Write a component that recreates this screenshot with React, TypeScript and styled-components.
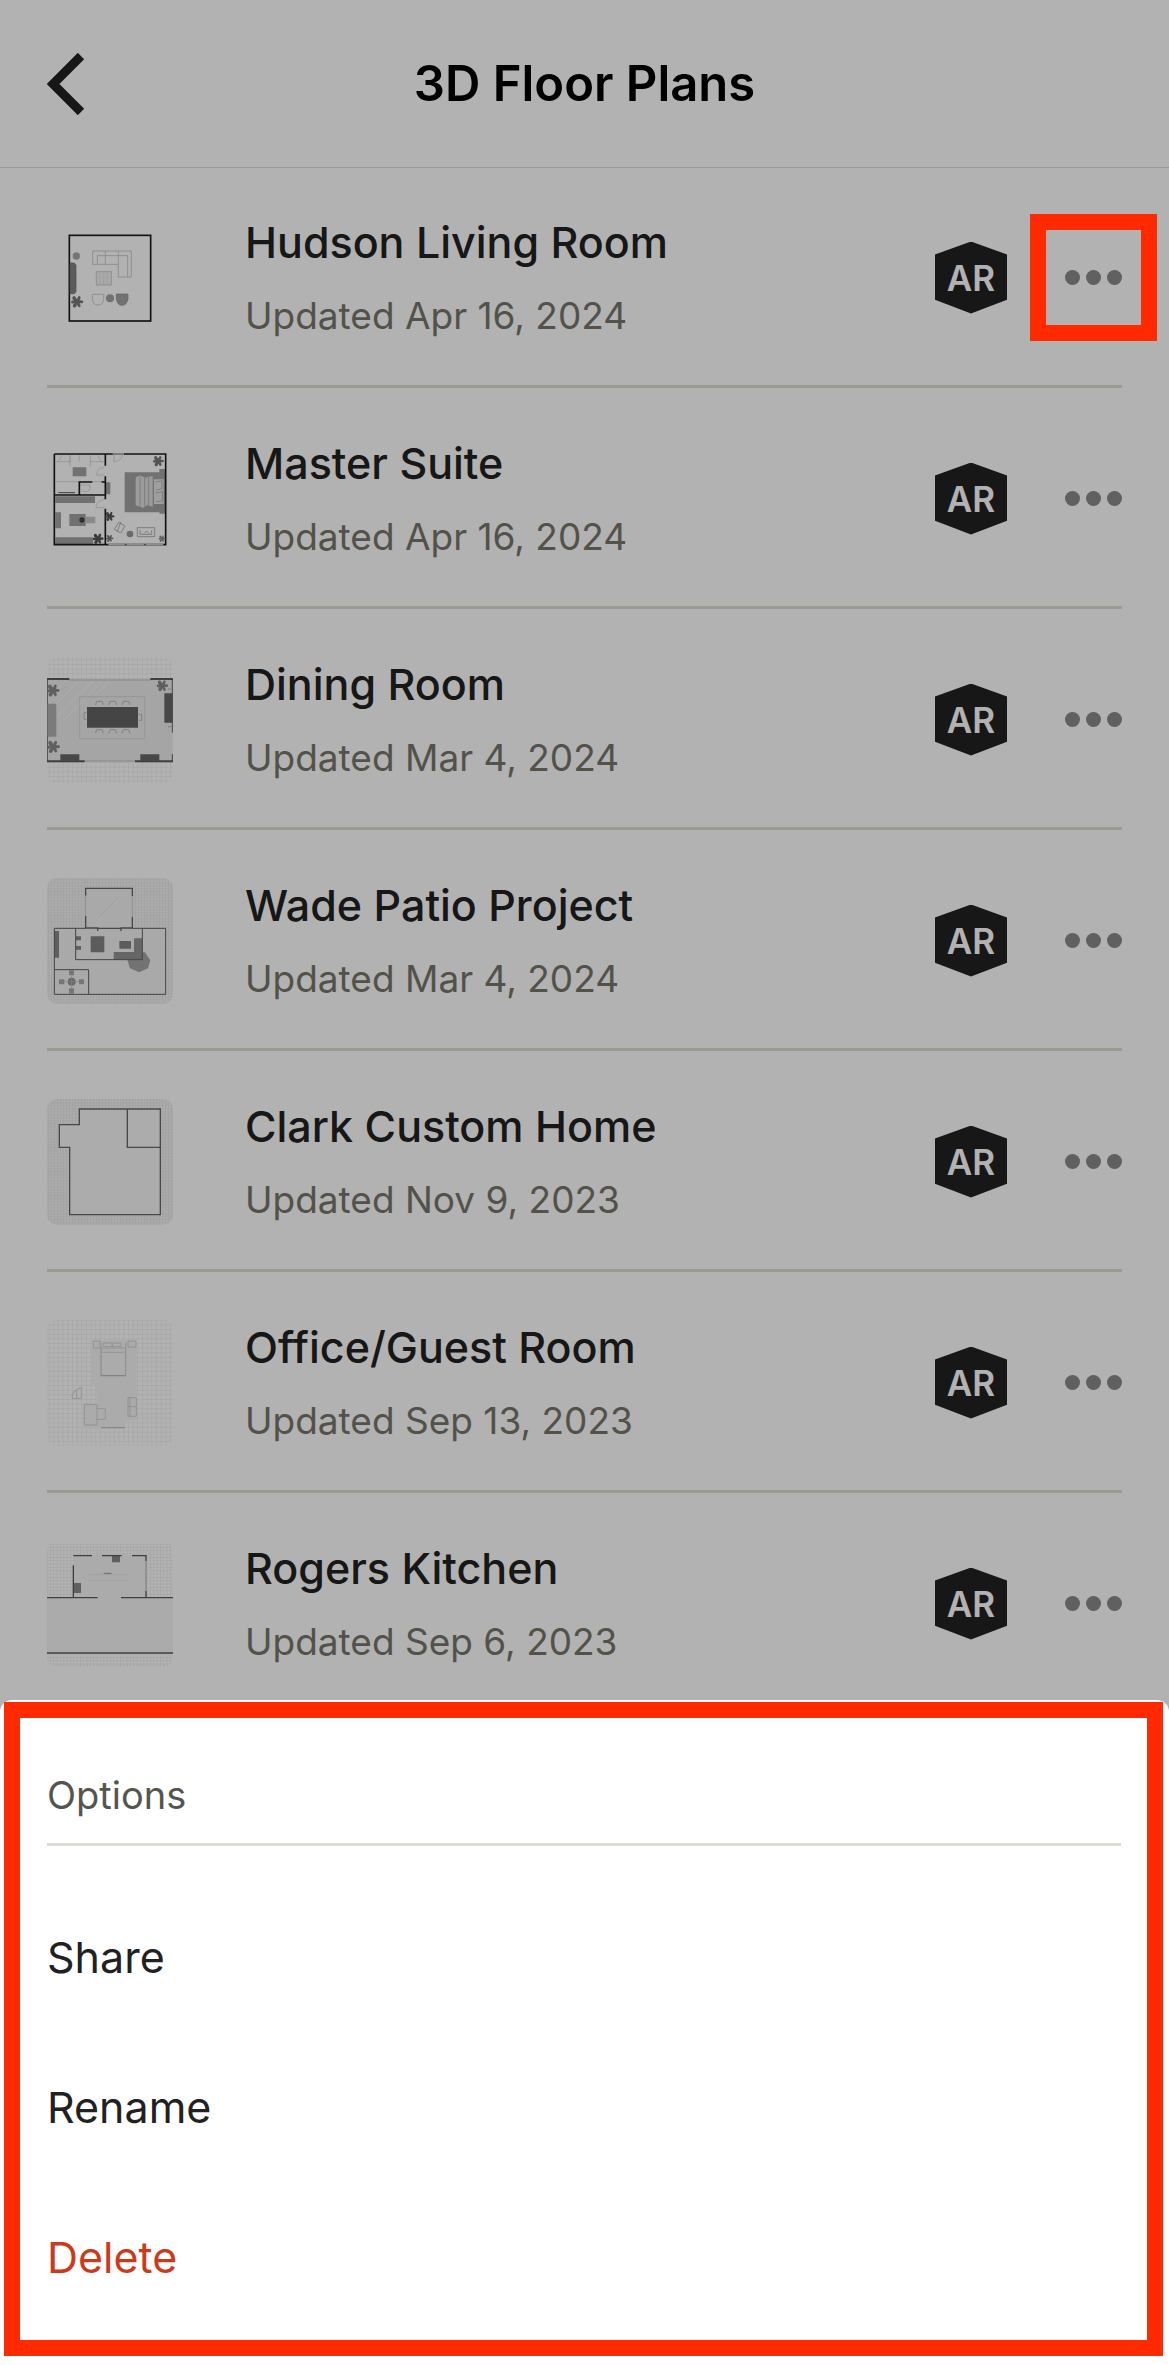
import React from "react";
import styled, { createGlobalStyle, css } from "styled-components";

const ink = "#212121";
const muted = "#77766b";
const rule = "#dddcd2";
const marker = "#ff2a00";

const GlobalStyle = createGlobalStyle`
  *, *::before, *::after { box-sizing: border-box; }
  body {
    margin: 0;
    background: #ffffff;
    color: ${ink};
    font-family: Inter, "Liberation Sans", sans-serif;
  }
  h1, h2, h3, p, ul { margin: 0; padding: 0; }
  ul { list-style: none; }
  button {
    border: 0;
    padding: 0;
    background: none;
    color: inherit;
    font: inherit;
    text-align: left;
    cursor: pointer;
  }
  svg { display: block; }
`;

const Screen = styled.div`
  min-height: 100vh;
  overflow: hidden;
`;

const Header = styled.header`
  display: grid;
  grid-template-columns: 1fr auto 1fr;
  align-items: center;
  height: 168px;
  padding: 0 47px;
  border-bottom: 1px solid #dcdcdc;
`;

const BackButton = styled.button`
  justify-self: start;
`;

const Title = styled.h1`
  color: #000000;
  font-size: 49px;
  line-height: 60px;
  font-weight: 600;
`;

const PlanList = styled.ul`
  margin-top: -1px;
`;

const PlanRow = styled.li`
  display: flex;
  align-items: center;
  height: 221px;
  margin: 0 47px;
  padding-top: 3px;
  border-bottom: 3px solid ${rule};
`;

const Thumb = styled.svg`
  flex: none;
  width: 126px;
  height: 126px;
  border-radius: 10px;
`;

const PlanText = styled.div`
  flex: 1;
  min-width: 0;
  padding: 0 0 2px 72px;
`;

const PlanName = styled.h2`
  font-size: 43px;
  line-height: 56px;
  font-weight: 500;
`;

const PlanDate = styled.p`
  margin-top: 22px;
  color: ${muted};
  font-size: 37px;
  line-height: 48px;
`;

const ArBadge = styled.button`
  display: grid;
  place-items: center;
  flex: none;
  width: 72px;
  height: 72px;
  margin-right: 58px;
  background: ${ink};
  clip-path: polygon(50% 0, 100% 18%, 100% 81%, 50% 100%, 0 81%, 0 18%);
  color: #ffffff;
  font-size: 35px;
  line-height: 40px;
  font-weight: 600;
`;

const MoreButton = styled.button<{ $marked?: boolean }>`
  position: relative;
  flex: none;
  width: 57px;
  height: 57px;
  ${(p) =>
    p.$marked &&
    css`
      &::after {
        content: "";
        position: absolute;
        z-index: 2;
        inset: -35px;
        border: 16px solid ${marker};
      }
    `}
`;

const Backdrop = styled.div`
  position: fixed;
  z-index: 1;
  inset: 0;
  background: rgba(0, 0, 0, 0.3);
`;

const Sheet = styled.section`
  position: fixed;
  z-index: 3;
  right: 0;
  bottom: 0;
  left: 0;
  padding: 71px 48px 33px 47px;
  border-radius: 12px 12px 0 0;
  background: #ffffff;

  &::after {
    content: "";
    position: absolute;
    inset: 2px 6px 9px 4px;
    border: 16px solid ${marker};
    pointer-events: none;
  }
`;

const SheetTitle = styled.h2`
  padding-bottom: 24px;
  margin-bottom: 36px;
  border-bottom: 3px solid ${rule};
  color: #55554f;
  font-size: 38px;
  line-height: 48px;
  font-weight: 400;
`;

const SheetAction = styled.button<{ $danger?: boolean }>`
  display: block;
  width: 100%;
  height: 150px;
  color: ${(p) => (p.$danger ? "#cc3a1c" : ink)};
  font-size: 43px;
  line-height: 56px;
`;

function GridPattern({ id, step = 9 }: { id: string; step?: number }) {
  return (
    <pattern id={id} width={step} height={step} patternUnits="userSpaceOnUse">
      <path d={`M0 0H${step}M0 0V${step}`} stroke="#dedede" strokeWidth="2" />
    </pattern>
  );
}

function Plant({ x, y, r = 16, fill = "#888" }: { x: number; y: number; r?: number; fill?: string }) {
  return (
    <g transform={`translate(${x} ${y}) scale(${r / 16})`} fill={fill}>
      <circle r="8" />
      <ellipse cx="-7" cy="-8" rx="5" ry="7" transform="rotate(-30 -7 -8)" />
      <ellipse cx="5" cy="-9" rx="4" ry="6" transform="rotate(25 5 -9)" />
      <ellipse cx="10" cy="0" rx="7" ry="4" />
      <ellipse cx="5" cy="9" rx="4" ry="6" transform="rotate(-30 5 9)" />
      <ellipse cx="-6" cy="10" rx="5" ry="6" transform="rotate(30 -6 10)" />
      <ellipse cx="-11" cy="1" rx="5" ry="4" />
    </g>
  );
}

function HudsonPlan() {
  return (
    <Thumb viewBox="51 14 378 378" fill="none" aria-hidden="true">
      <rect x="118" y="75" width="244" height="257" stroke="#1c1c1c" strokeWidth="5" />
      <circle cx="139" cy="137" r="11" fill="#aaa" />
      <path d="M120 158H133L138 164V244L133 250H120Z" fill="#858585" stroke="#6c6c6c" strokeWidth="2" />
      <Plant x={141} y={274} r={18} fill="#777" />
      <g stroke="#cdcdcd" strokeWidth="3">
        <path d="M188 122H304V200H265V162H188ZM226 122V162M265 122V162M202 162V136H293V200" />
        <path d="M199 184H244V224H199Z" fill="#f2f2f2" />
        <path d="M187 252H221V268Q218 284 204 284Q190 284 187 268Z" />
      </g>
      <path d="M210 186V222M221 186V222M232 186V222" stroke="#dedede" strokeWidth="2" />
      <circle cx="240" cy="264" r="12" fill="#a2a2a2" />
      <path d="M259 251H294V266Q290 285 276 285Q262 285 259 266Z" fill="#a2a2a2" stroke="#8d8d8d" strokeWidth="2" />
    </Thumb>
  );
}

function MasterPlan() {
  return (
    <Thumb viewBox="51 17 378 378" fill="none" aria-hidden="true">
      <path d="M128 111H169V138H128ZM76 198H195V218H76ZM76 246H93V294H76ZM76 321H189V342H76ZM118 251H167V287H118ZM228 156H241V192H228ZM284 126H405V246H284ZM388 116H405V250H388Z" fill="#a2a2a2" />
      <path d="M167 259H196V279H167Z" fill="#c4c4c4" />
      <path d="M317 141L330 135L345 142L368 136V230L352 224L340 232L317 225Z" fill="#dedede" />
      <path d="M330 136V228M344 143V229M356 140V226" stroke="#b5b5b5" strokeWidth="3" />
      <path d="M372 147H401V221H372Z" fill="#e4e4e4" />
      <path d="M377 155L396 151V175L378 180M377 188L397 184V212L378 214" stroke="#b5b5b5" strokeWidth="3" />
      <g stroke="#c8c8c8" strokeWidth="2">
        <path d="M77 94H120V75M120 110V75M181 75V110M181 94H224M96 75L84 94M148 75V94M203 75L213 94M78 154H224M150 164H180V178Q165 190 154 178M224 111Q200 112 200 134H224M224 207Q199 210 198 232H224M252 72V95Q274 92 278 73" />
      </g>
      <path d="M73 71H407V343H228M73 71V343H228M226 71V106M226 138V207M226 235V343M73 194H226M148 194V155H187M215 155H226" stroke="#1c1c1c" strokeWidth="5" />
      <path d="M248 71H282M235 343H400" stroke="#cfcfcf" strokeWidth="5" />
      <path d="M284 343H290M342 343H348M85 187H135" stroke="#555" strokeWidth="3" />
      <circle cx="156" cy="269" r="8" fill="#444" />
      <Plant x={385} y={92} r={16} fill="#777" />
      <Plant x={239} y={258} r={14} fill="#555" />
      <Plant x={204} y={325} r={16} fill="#555" />
      <Plant x={239} y={324} r={11} fill="#777" />
      <Plant x={396} y={325} r={10} fill="#888" />
      <circle cx="300" cy="311" r="10" fill="#999" />
      <path d="M266 276L285 287L272 308L253 297ZM273 274L262 303M322 292H374V319H322ZM330 299V312H365V299M342 310L350 302L358 310" stroke="#8c8c8c" strokeWidth="2" />
    </Thumb>
  );
}

function DiningPlan() {
  return (
    <Thumb viewBox="51 35 378 378" fill="none" aria-hidden="true">
      <GridPattern id="grid-dining" step={14} />
      <rect x="51" y="35" width="378" height="378" fill="url(#grid-dining)" />
      <rect x="52" y="101" width="376" height="248" fill="#ededed" />
      <path d="M65 190L145 107M80 215L185 107M100 225L210 115M60 160L105 107M150 150L190 107M195 150L240 107" stroke="#fafafa" strokeWidth="3" />
      <path d="M149 154H344V280H149Z" stroke="#d7d7d7" strokeWidth="3" />
      <path d="M118 104H362M162 347H316" stroke="#d0d0d0" strokeWidth="5" />
      <path d="M52 100V350M427 100V262M427 326V350" stroke="#636363" strokeWidth="3" />
      <path d="M51 101H118M361 101H429M51 348H164M315 348H429" stroke="#5b5b5b" strokeWidth="6" />
      <path d="M171 185H324V247H171Z" fill="#636363" />
      <path d="M53 175H79V274H53Z" fill="#b1b1b1" />
      <path d="M403 144H428V232H403ZM91 327H148V347H91ZM331 327H388V347H331Z" fill="#676767" />
      <path d="M196 179L200 168H216L220 179M236 179L240 168H256L260 179M276 179L280 168H296L300 179M196 264L200 253H216L220 264M236 264L240 253H256L260 264M276 264L280 253H296L300 264M169 202H162V222H169M327 207H335V225H327M414 131H427M414 244H427" stroke="#b8b8b8" strokeWidth="3" />
      <Plant x={69} y={135} r={19} />
      <Plant x={70} y={304} r={19} />
      <Plant x={397} y={121} r={17} />
    </Thumb>
  );
}

function WadePlan() {
  return (
    <Thumb viewBox="51 23 378 378" fill="none" aria-hidden="true">
      <GridPattern id="grid-wade" />
      <rect x="51" y="23" width="378" height="378" fill="#f5f5f5" />
      <rect x="51" y="23" width="378" height="378" fill="url(#grid-wade)" />
      <path d="M167 54H307V174H407V372H73V174H167Z" fill="#f3f3f3" />
      <path d="M205 142L266 80" stroke="#ddd" strokeWidth="2" />
      <path d="M307 245L345 246L361 270L354 294L327 306L300 294L292 269H336V245Z" fill="#a5a5a5" />
      <path d="M251 245H312V204H336V268H251Z" fill="#929292" />
      <path d="M182 198H223V246H182ZM268 212H303V235H268Z" fill="#858585" />
      <path d="M73 182H87V262H73ZM137 198H153V210H137ZM137 227H153V238H137Z" fill="#888" />
      <path d="M167 76V54H307V78M167 137V173H203V182M307 139V173H273V182M205 174H271" stroke="#666" strokeWidth="4" />
      <path d="M167 76V137M307 78V139" stroke="#d0d0d0" strokeWidth="3" />
      <path d="M167 174H73V372H407V174H307M137 174V268H337V174M73 298H176V372" stroke="#606060" strokeWidth="3" />
      <circle cx="125" cy="334" r="12" fill="#999" />
      <path d="M117 300H132V315H117ZM117 354H132V370H117ZM87 327H103V342H87ZM147 327H162V342H147Z" fill="#aaa" />
      <path d="M103 334H147M125 315V354" stroke="#bbb" strokeWidth="2" />
    </Thumb>
  );
}

function ClarkPlan() {
  return (
    <Thumb viewBox="51 26 378 378" fill="none" aria-hidden="true">
      <GridPattern id="grid-clark" />
      <rect x="51" y="26" width="378" height="378" fill="#f5f5f5" />
      <rect x="51" y="26" width="378" height="378" fill="url(#grid-clark)" />
      <path d="M148 56H391V373H119V171H88V103H148Z" fill="#f7f7f7" stroke="#686868" strokeWidth="4" />
      <path d="M292 56V171H391" stroke="#686868" strokeWidth="4" />
    </Thumb>
  );
}

function OfficePlan() {
  return (
    <Thumb viewBox="51 29 378 378" fill="none" aria-hidden="true">
      <GridPattern id="grid-office" step={14} />
      <rect x="51" y="29" width="378" height="378" fill="url(#grid-office)" />
      <path d="M186 90H320V330H285V355H160V280H200V230L186 220Z" fill="#f5f5f5" />
      <g stroke="#d2d2d2" strokeWidth="3">
        <path d="M190 92H210V113H190ZM294 92H318V110H294ZM213 113H287V196H213ZM220 98H246V109H220ZM248 98H273V109H248ZM217 126H283M213 96V196M287 96V196" />
        <path d="M126 262Q126 240 154 232V264H126M140 240V262M163 282H201V344H163ZM201 295H226V327H201M294 262H319V318H294ZM294 289H319M300 262V318" />
      </g>
      <path d="M213 352H284M213 196H287" stroke="#b8b8b8" strokeWidth="3" />
    </Thumb>
  );
}

function RogersPlan() {
  return (
    <Thumb viewBox="51 32 378 378" fill="none" aria-hidden="true">
      <GridPattern id="grid-rogers" step={10} />
      <rect x="51" y="40" width="378" height="370" fill="url(#grid-rogers)" />
      <path d="M131 76H348V202H429V368H51V202H131Z" fill="#f5f5f5" />
      <path d="M175 133H292M175 150H292" stroke="#dfdfdf" strokeWidth="2" />
      <path d="M221 129H244" stroke="#999" strokeWidth="3" />
      <path d="M246 77H270V96H246ZM132 158H153V188H132Z" fill="#888" />
      <path d="M348 94V182" stroke="#c8c8c8" strokeWidth="5" />
      <path d="M130 76H186M216 76H275M306 76H348V93M348 182V202M130 105V202M51 202H203M273 202H429M51 368H429" stroke="#5b5b5b" strokeWidth="4" />
    </Thumb>
  );
}

const plans = [
  { name: "Hudson Living Room", updated: "Updated Apr 16, 2024", Plan: HudsonPlan, marked: true },
  { name: "Master Suite", updated: "Updated Apr 16, 2024", Plan: MasterPlan },
  { name: "Dining Room", updated: "Updated Mar 4, 2024", Plan: DiningPlan },
  { name: "Wade Patio Project", updated: "Updated Mar 4, 2024", Plan: WadePlan },
  { name: "Clark Custom Home", updated: "Updated Nov 9, 2023", Plan: ClarkPlan },
  { name: "Office/Guest Room", updated: "Updated Sep 13, 2023", Plan: OfficePlan },
  { name: "Rogers Kitchen", updated: "Updated Sep 6, 2023", Plan: RogersPlan },
];

export default function App() {
  return (
    <>
      <GlobalStyle />
      <Screen>
        <Header>
          <BackButton aria-label="Back">
            <svg width="38" height="62" viewBox="0 0 38 62" fill="none">
              <path d="M34 3L6 31L34 59" stroke={ink} strokeWidth="9" />
            </svg>
          </BackButton>
          <Title>3D Floor Plans</Title>
        </Header>
        <main>
          <PlanList>
            {plans.map(({ name, updated, Plan, marked }) => (
              <PlanRow key={name}>
                <Plan />
                <PlanText>
                  <PlanName>{name}</PlanName>
                  <PlanDate>{updated}</PlanDate>
                </PlanText>
                <ArBadge>AR</ArBadge>
                <MoreButton $marked={marked} aria-label={`Options for ${name}`}>
                  <svg width="57" height="15" viewBox="0 0 57 15" fill="#8a8a8a">
                    <circle cx="7.5" cy="7.5" r="7.5" />
                    <circle cx="28.5" cy="7.5" r="7.5" />
                    <circle cx="49.5" cy="7.5" r="7.5" />
                  </svg>
                </MoreButton>
              </PlanRow>
            ))}
          </PlanList>
        </main>
      </Screen>
      <Backdrop />
      <Sheet role="dialog" aria-labelledby="sheet-title">
        <SheetTitle id="sheet-title">Options</SheetTitle>
        <SheetAction>Share</SheetAction>
        <SheetAction>Rename</SheetAction>
        <SheetAction $danger>Delete</SheetAction>
      </Sheet>
    </>
  );
}
